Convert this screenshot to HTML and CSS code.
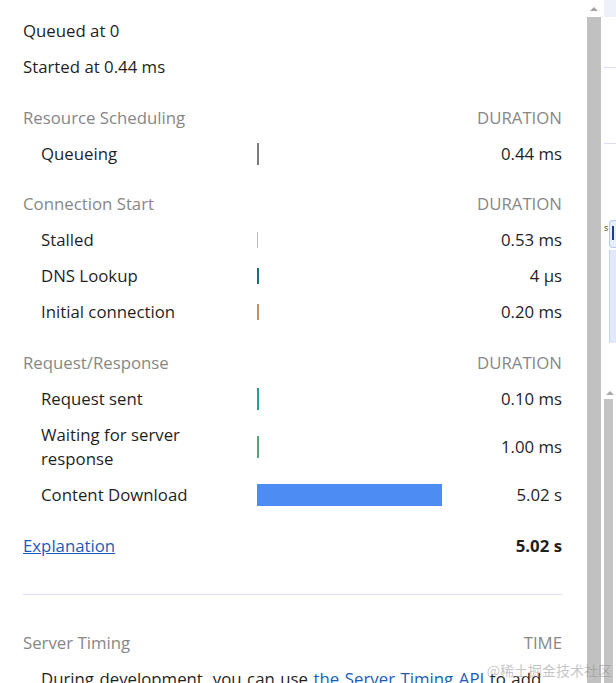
FILE: index.html
```html
<!DOCTYPE html>
<html lang="en">
<head>
<meta charset="utf-8">
<title>Timing</title>
<link rel="stylesheet" href="styles.css">
</head>
<body>
<div class="window">
  <main class="timing">
    <div class="line">Queued at 0</div>
    <div class="line">Started at 0.44 ms</div>

    <section class="group">
      <div class="head"><span>Resource Scheduling</span><span>DURATION</span></div>
      <div class="row"><span class="label">Queueing</span><span class="track"><span class="bar queueing" style="width:2px"></span></span><span class="value">0.44 ms</span></div>
    </section>

    <section class="group">
      <div class="head"><span>Connection Start</span><span>DURATION</span></div>
      <div class="row"><span class="label">Stalled</span><span class="track"><span class="bar short stalled" style="width:1px"></span></span><span class="value">0.53 ms</span></div>
      <div class="row"><span class="label">DNS Lookup</span><span class="track"><span class="bar short dns" style="width:1.5px"></span></span><span class="value">4 µs</span></div>
      <div class="row"><span class="label">Initial connection</span><span class="track"><span class="bar short initial" style="width:1.5px"></span></span><span class="value">0.20 ms</span></div>
    </section>

    <section class="group">
      <div class="head"><span>Request/Response</span><span>DURATION</span></div>
      <div class="row"><span class="label">Request sent</span><span class="track"><span class="bar sent" style="width:1.5px"></span></span><span class="value">0.10 ms</span></div>
      <div class="row"><span class="label">Waiting for server response</span><span class="track"><span class="bar waiting" style="width:1.5px"></span></span><span class="value">1.00 ms</span></div>
      <div class="row"><span class="label">Content Download</span><span class="track"><span class="bar download" style="width:185px"></span></span><span class="value">5.02 s</span></div>
    </section>

    <div class="total"><a href="#" class="link">Explanation</a><strong>5.02 s</strong></div>

    <hr class="divider">

    <section class="server">
      <div class="head"><span>Server Timing</span><span>TIME</span></div>
      <p class="note">During development, you can use <a href="#" class="inline-link">the Server Timing API</a> to add insights into the server-side timing of this request.</p>
    </section>
  </main>

  <div class="scrollbar">
    <div class="arrow"><span class="tri"></span></div>
    <div class="thumb"></div>
  </div>

  <div class="side">
    <div class="side-top"></div>
    <div class="side-gap a"></div>
    <div class="side-rule"></div>
    <div class="side-gap b"></div>
    <div class="side-rule"></div>
    <div class="side-gap c"></div>
    <div class="side-tab"><span class="side-s">s</span><span class="tab"><span class="caret"></span></span></div>
    <div class="side-sel"></div>
    <div class="side-gap d"></div>
    <div class="side-arrow"><span class="tri small"></span></div>
    <div class="side-thumb"></div>
  </div>

  <div class="watermark">@稀土掘金技术社区</div>
</div>
</body>
</html>
```

FILE: styles.css
```css
html, body {
  margin: 0;
  padding: 0;
  height: 683px;
  overflow: hidden;
  background: #ffffff;
}

body {
  font-family: "Open Sans", "Noto Sans", sans-serif;
  font-size: 16.8px;
  color: #1f1f1f;
}

.window {
  position: relative;
  display: flex;
  height: 683px;
}

.timing {
  width: 539px;
  flex: none;
  padding: 13px 23px 0 23px;
  overflow: hidden;
}

.line {
  padding: 6px 0;
  line-height: 24px;
}

.group {
  margin-top: 14.5px;
}

.head {
  display: flex;
  justify-content: space-between;
  padding: 6px 0;
  line-height: 24px;
  color: #878787;
}

.row {
  display: grid;
  grid-template-columns: 216px 185px 1fr;
  align-items: center;
  padding: 6px 0 6px 18px;
  line-height: 24px;
}

.label {
  padding-right: 12px;
}

.track {
  display: flex;
  align-items: center;
  height: 24px;
}

.bar {
  display: block;
  height: 22px;
}

.bar.short {
  height: 16px;
}

.queueing { background: #7d7d7d; }
.stalled { background: #bcbcbc; }
.dns { background: #19707d; }
.initial { background: #c98f5c; }
.sent { background: #21a19a; }
.waiting { background: #56a57a; }
.download { background: #4d8cf2; }

.value {
  text-align: right;
}

.total {
  display: flex;
  justify-content: space-between;
  margin-top: 15.5px;
  padding: 6px 0;
  line-height: 24px;
}

.total strong {
  font-weight: 700;
}

.link {
  color: #1b5cb8;
  text-decoration: underline;
}

.divider {
  margin: 30px 0 30px 0;
  border: none;
  border-top: 1px solid #dcdff1;
  height: 0;
}

.note {
  margin: 0;
  padding: 6px 0 6px 18px;
  line-height: 24px;
  word-spacing: 1.2px;
}

.inline-link {
  color: #1b5cb8;
  text-decoration: none;
}

/* scrollbar */
.scrollbar {
  width: 19px;
  flex: none;
  display: flex;
  flex-direction: column;
  background: #ffffff;
}

.arrow {
  height: 17px;
  display: flex;
  align-items: center;
  justify-content: center;
  padding-right: 1px;
}

.tri {
  width: 0;
  height: 0;
  border-left: 4px solid transparent;
  border-right: 4px solid transparent;
  border-bottom: 4px solid #a3a3a3;
}

.thumb {
  flex: 1;
  margin: 0 3px 0 2px;
  background: #c1c1c1;
}

/* neighbouring panel strip */
.side {
  flex: 1;
  display: flex;
  flex-direction: column;
  background: #ffffff;
  overflow: hidden;
}

.side-top {
  height: 17px;
  background: #eef0fa;
}

.side-gap.a { height: 50px; }
.side-gap.b { height: 75px; }
.side-gap.c { height: 76px; }
.side-gap.d { height: 44px; }

.side-rule {
  height: 1px;
  background: #dde0f2;
}

.side-tab {
  height: 30px;
  display: flex;
  align-items: flex-start;
}

.side-s {
  font-size: 9px;
  line-height: 10px;
  margin-top: 3px;
  color: #333;
  width: 5px;
  overflow: hidden;
}

.tab {
  flex: 1;
  height: 28px;
  border: 1px solid #b7c9ef;
  border-right: none;
  border-radius: 4px 0 0 4px;
  background: #e7eefc;
  display: flex;
  padding-left: 2px;
  padding-top: 5px;
  box-sizing: border-box;
}

.caret {
  width: 1.5px;
  height: 14px;
  background: #1f3f86;
}

.side-sel {
  height: 93px;
  margin-left: 5px;
  background: #e2e9fb;
  border-left: 1px solid #c4d3f3;
}

.side-arrow {
  height: 12px;
  display: flex;
  align-items: center;
  padding-left: 2px;
}

.tri.small {
  border-bottom-color: #a8a8a8;
}

.side-thumb {
  flex: 1;
  width: 9px;
  background: #c4c4c4;
}

.watermark {
  position: absolute;
  right: 4px;
  bottom: 4px;
  font-family: "Noto Sans CJK SC", "Liberation Serif", serif;
  font-size: 14px;
  line-height: 18px;
  color: rgba(140, 140, 140, 0.5);
  pointer-events: none;
}
```
